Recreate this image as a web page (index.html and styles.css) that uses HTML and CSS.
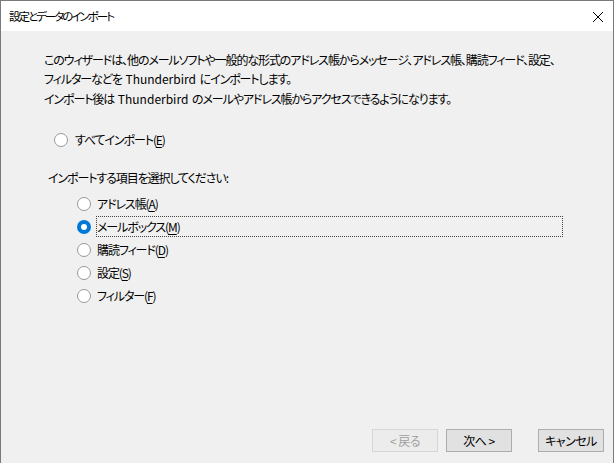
FILE: index.html
```html
<!DOCTYPE html>
<html lang="ja">
<head>
<meta charset="utf-8">
<title>設定とデータのインポート</title>
<link rel="stylesheet" href="styles.css">
</head>
<body>
<div class="window">
  <div class="titlebar">
    <span class="title">設定とデータのインポート</span>
    <svg class="close" width="12" height="12" viewBox="0 0 12 12"><path d="M1 1 L11 11 M11 1 L1 11" stroke="#000" stroke-width="1" fill="none"/></svg>
  </div>
  <div class="content">
    <p class="intro">このウィザードは、他のメールソフトや一般的な形式のアドレス帳からメッセージ、アドレス帳、購読フィード、設定、<br>フィルターなどを<span class="latin"> Thunderbird </span>にインポートします。</p>
    <p class="intro2">インポート後は<span class="latin"> Thunderbird </span>のメールやアドレス帳からアクセスできるようになります。</p>
    <div class="radio-row all">
      <span class="radio"></span>
      <span class="label">すべてインポート(<u>E</u>)</span>
    </div>
    <div class="section-label">インポートする項目を選択してください:</div>
    <div class="items">
      <div class="radio-row">
        <span class="radio"></span>
        <span class="label">アドレス帳(<u>A</u>)</span>
      </div>
      <div class="radio-row">
        <span class="radio checked"></span>
        <span class="label focus">メールボックス(<u>M</u>)</span>
      </div>
      <div class="radio-row">
        <span class="radio"></span>
        <span class="label">購読フィード(<u>D</u>)</span>
      </div>
      <div class="radio-row">
        <span class="radio"></span>
        <span class="label">設定(<u>S</u>)</span>
      </div>
      <div class="radio-row">
        <span class="radio"></span>
        <span class="label">フィルター(<u>F</u>)</span>
      </div>
    </div>
    <div class="buttons">
      <button class="btn" disabled>&lt; 戻る</button>
      <button class="btn">次へ &gt;</button>
      <button class="btn cancel">キャンセル</button>
    </div>
  </div>
</div>
</body>
</html>
```

FILE: styles.css
```css
html, body {
  margin: 0;
  padding: 0;
}
body {
  width: 614px;
  height: 463px;
  overflow: hidden;
  font-family: "Noto Sans CJK JP", "Noto Sans", sans-serif;
  font-size: 12px;
  color: #000;
  font-feature-settings: "palt";
  letter-spacing: -1.1px;
}
.latin {
  letter-spacing: 0;
  word-spacing: 1px;
}
.window {
  box-sizing: border-box;
  width: 614px;
  height: 463px;
  border: 1px solid #7a7a7a;
  border-bottom: none;
  display: flex;
  flex-direction: column;
}
.titlebar {
  height: 30px;
  background: #fff;
  display: flex;
  align-items: center;
  justify-content: space-between;
  padding: 0 9px 0 8px;
  flex: none;
}
.title {
  font-size: 11.5px;
  letter-spacing: -2px;
}
.close {
  display: block;
  margin-top: 1px;
}
.content {
  flex: 1;
  background: #f0f0f0;
  display: flex;
  flex-direction: column;
  padding: 19px 0 0 43px;
}
.intro, .intro2 {
  margin: 0;
  line-height: 19px;
  white-space: nowrap;
}
.intro2 {
  margin-top: 1px;
}
.radio-row {
  display: flex;
  align-items: center;
  height: 23px;
}
.radio-row.all {
  margin-top: 20px;
  margin-left: 10px;
}
.radio {
  box-sizing: border-box;
  width: 14px;
  height: 14px;
  border-radius: 50%;
  border: 1px solid #999;
  background: #fff;
  flex: none;
}
.radio.checked {
  border: 4px solid #0078d7;
  background: #fff;
}
.label {
  margin-left: 7px;
  line-height: 19px;
}
.label u {
  text-decoration-thickness: 1px;
  text-underline-offset: 2px;
}
.section-label {
  margin-top: 17px;
  margin-left: 4px;
  line-height: 19px;
}
.items {
  margin-top: 5px;
  margin-left: 33px;
}
.items .label {
  margin-left: 6px;
}
.label.focus {
  box-sizing: border-box;
  width: 467px;
  height: 21px;
  line-height: 19px;
  border: 1px dotted #444;
  margin-left: 5px;
}
.buttons {
  margin-top: auto;
  display: flex;
  justify-content: flex-end;
  padding: 0 9px 11px 0;
  gap: 8px;
}
.btn {
  box-sizing: border-box;
  width: 66px;
  height: 23px;
  font-family: inherit;
  font-size: 12px;
  font-feature-settings: "palt";
  letter-spacing: -0.5px;
  background: #e1e1e1;
  border: 1px solid #adadad;
  color: #000;
  padding: 0;
  margin: 0;
}
.btn:disabled {
  background: #ececec;
  border-color: #d6d6d6;
  color: #a0a0a0;
}
.btn.cancel {
  margin-left: 18px;
}
```
